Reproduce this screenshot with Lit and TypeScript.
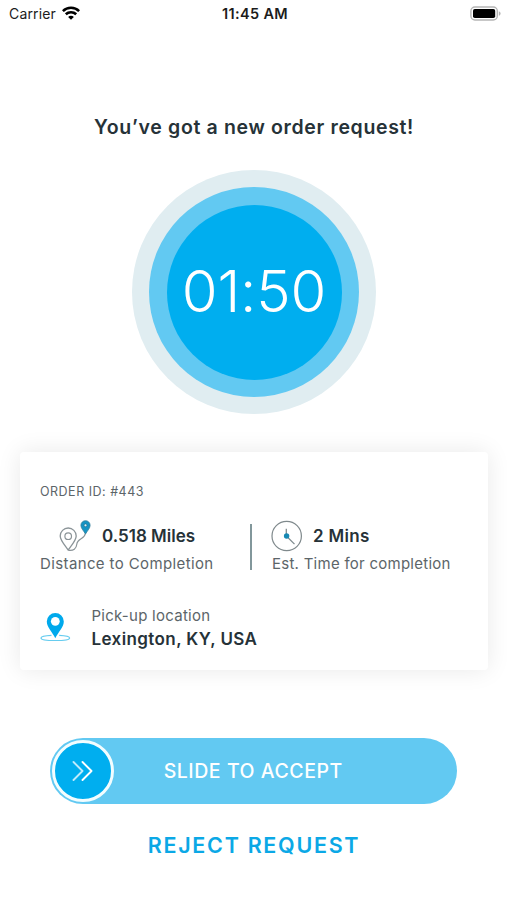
import { LitElement, html, css } from "lit";
import { customElement, property } from "lit/decorators.js";

@customElement("status-bar")
class StatusBar extends LitElement {
  static styles = css`
    :host { display: grid; grid-template-columns: 1fr auto 1fr; align-items: center; height: 26px; padding: 0 6px 0 9px; color: #1c1c1c; }
    .left { display: flex; align-items: center; gap: 6px; font-size: 14px; letter-spacing: 0.15px; }
    .time { font-size: 14.5px; font-weight: 600; letter-spacing: 0.35px; }
    .right { display: flex; justify-content: flex-end; }
    svg { display: block; }
  `;
  render() {
    return html`
      <div class="left"><span>Carrier</span>
        <svg width="18" height="14" viewBox="0 0 18 14" fill="none" stroke="#000" stroke-width="2.6">
          <path d="M.9 5.1C5.3.7 12.7.7 17.1 5.1"/><path d="M3.8 8.3c2.9-2.8 7.5-2.8 10.4 0"/>
          <path d="M9 13.8 6.1 10.9c1.6-1.5 4.2-1.5 5.8 0z" fill="#000" stroke="none"/>
        </svg>
      </div>
      <div class="time">11:45 AM</div>
      <div class="right">
        <svg width="31" height="15" viewBox="0 0 31 15">
          <rect x=".9" y="1" width="26.4" height="13" rx="4" fill="#fff" stroke="#b5b5b5" stroke-width="1.4"/>
          <rect x="3" y="3" width="22.2" height="9" rx="1.8" fill="#000"/>
          <path d="M28.8 5.2c2.4.8 2.4 3.8 0 4.6z" fill="#b5b5b5"/>
        </svg>
      </div>`;
  }
}

@customElement("countdown-dial")
class CountdownDial extends LitElement {
  @property() time = "";
  static styles = css`
    :host { display: block; }
    .outer, .middle, .inner { display: flex; align-items: center; justify-content: center; border-radius: 50%; }
    .outer { width: 244px; height: 244px; background: #e0edf1; }
    .middle { width: 210px; height: 210px; background: #62c9f2; }
    .inner { width: 175px; height: 175px; background: #00aeef; }
    .time { padding-bottom: 3px; color: #fff; font-size: 58px; line-height: 60px; font-weight: 300; letter-spacing: -0.2px; white-space: nowrap; }
  `;
  render() {
    return html`<div class="outer"><div class="middle"><div class="inner"><span class="time">${this.time}</span></div></div></div>`;
  }
}

@customElement("order-card")
class OrderCard extends LitElement {
  static styles = css`
    :host { display: block; box-sizing: border-box; height: 218px; padding: 31px 20px 0; background: #fff; border-radius: 4px; box-shadow: 0 0 24px rgba(0, 0, 0, 0.09); color: #5c6569; }
    svg { display: block; flex: none; }
    .id { font-size: 12.5px; line-height: 18px; letter-spacing: 0.5px; }
    .stats { display: flex; margin-top: 18px; }
    .distance { width: 210px; }
    .value { display: flex; align-items: center; height: 34px; color: #263238; font-size: 17px; font-weight: 600; }
    .distance .value { padding-left: 18px; gap: 10px; }
    .time .value { gap: 10px; }
    .label { font-size: 15px; line-height: 20px; letter-spacing: 0.26px; white-space: nowrap; }
    .stats .label { padding-top: 1px; }
    .distance .label { letter-spacing: 0.38px; }
    .time .label { padding-left: 1px; }
    .divider { width: 2px; height: 46px; margin: 5px 19px 0 0; background: #82979b; }
    .pickup { display: flex; align-items: flex-start; margin-top: 31px; gap: 20px; }
    .pickup svg { margin-top: 5px; }
    .place { margin-top: 1px; padding-left: 0.5px; color: #263238; font-size: 17px; line-height: 24px; font-weight: 600; letter-spacing: 0.4px; }
    .pickup .label { padding: 1px 0 0 0.5px; }
    .mins { letter-spacing: 0.3px; }
  `;
  render() {
    return html`
      <div class="id">ORDER ID: #443</div>
      <div class="stats">
        <div class="distance">
          <div class="value">
            <svg width="34" height="34" viewBox="0 0 34 34" fill="none">
              <path d="M10.2 31C6.2 25.4 2.2 21.2 2.2 17a8 8 0 0 1 16 0c0 4.2-4 8.4-8 14z" stroke="#8b9498" stroke-width="1.3"/>
              <circle cx="10.2" cy="17.2" r="3.3" stroke="#8b9498" stroke-width="1.2"/>
              <path d="M10.5 31.3c5 .6 7.8-1.3 8.3-6 .5-6.3 7.7-4.8 8.7-11" stroke="#8b9498" stroke-width="1.2"/>
              <path d="M27.5 15C25 11 22.900 9 22.900 6.300a4.600 4.600 0 0 1 9.200 0c0 2.700-2.100 4.700-4.600 8.700z" fill="#1594c4" stroke="#347f9b" stroke-width=".8"/>
              <circle cx="27.5" cy="6.3" r="1.4" fill="#d8f1fa" stroke="#24627a" stroke-width=".6"/>
            </svg>
            <span>0.518 Miles</span>
          </div>
          <div class="label">Distance to Completion</div>
        </div>
        <div class="divider"></div>
        <div class="time">
          <div class="value">
            <svg width="32" height="32" viewBox="0 0 32 32" fill="none">
              <circle cx="15.7" cy="16" r="14.7" stroke="#7f898c" stroke-width="1.2"/>
              <path d="M15.3 8.7v7.2l8.2 8.2" stroke="#7f8b8f" stroke-width="1.3"/>
              <circle cx="15.6" cy="16" r="2.7" fill="#1688b3"/>
            </svg>
            <span class="mins">2 Mins</span>
          </div>
          <div class="label">Est. Time for completion</div>
        </div>
      </div>
      <div class="pickup">
        <svg width="31" height="32" viewBox="0 0 31 32" fill="none">
          <path d="M11.5 25.3C5.5 25.6 1 26.6 1 27.9 1 29.5 7.5 30.5 15.3 30.5s14.3-1 14.3-2.6c0-1.3-4.5-2.3-10.4-2.6" stroke="#66ccef" stroke-width="1.2"/>
          <path d="M15.3 28.2C12.5 22 6.8 17.2 6.8 11.4a8.500 8.500 0 0 1 17 0c0 5.800-5.700 10.600-8.500 16.800z" fill="#00a9ec"/>
          <circle cx="15.3" cy="11.3" r="4.4" fill="#fff"/>
        </svg>
        <div>
          <div class="label">Pick-up location</div>
          <div class="place">Lexington, KY, USA</div>
        </div>
      </div>`;
  }
}

@customElement("slide-button")
class SlideButton extends LitElement {
  static styles = css`
    :host { display: flex; align-items: center; box-sizing: border-box; height: 66px; border-radius: 33px; background: #62c9f2; color: #fff; }
    .knob { box-sizing: border-box; flex: none; display: flex; align-items: center; justify-content: center; width: 62px; height: 62px; margin-left: 1.5px; border: 3px solid #f2fdff; border-radius: 50%; background: #00aeef; }
    .text { flex: 1; padding-right: 87px; padding-left: 23px; text-align: center; font-size: 19.5px; font-weight: 500; letter-spacing: 0.55px; white-space: nowrap; }
  `;
  render() {
    return html`
      <div class="knob">
        <svg width="22" height="22" viewBox="0 0 22 22" fill="none" stroke="#fff" stroke-width="1.9" stroke-linecap="round" stroke-linejoin="round">
          <path opacity=".75" d="m1.5 2 9 9-9 9"/><path d="m10.5 2 9 9-9 9"/>
        </svg>
      </div>
      <span class="text">SLIDE TO ACCEPT</span>`;
  }
}

@customElement("app-root")
class AppRoot extends LitElement {
  static styles = css`
    :host { display: flex; flex-direction: column; height: 900px; overflow: hidden; background: #fff; font-family: Inter, "Open Sans", sans-serif; }
    h1 { margin: 87px 0 0; padding-left: 1px; text-align: center; color: #263238; font-size: 19.5px; line-height: 28px; font-weight: 600; letter-spacing: 0.65px; white-space: nowrap; }
    countdown-dial { align-self: center; margin: 29px 0 0 1px; }
    order-card { margin: 38px 19px 0 20px; }
    slide-button { margin: 68px 50px 0 50px; }
    .reject { align-self: center; margin-top: 26px; padding: 0 0 0 1px; border: 0; background: none; color: #0ba8e6; font-family: inherit; font-size: 21.5px; line-height: 30px; font-weight: 600; letter-spacing: 1.7px; }
  `;
  render() {
    return html`
      <status-bar></status-bar>
      <h1>You’ve got a new order request!</h1>
      <countdown-dial time="01:50"></countdown-dial>
      <order-card></order-card>
      <slide-button></slide-button>
      <button class="reject">REJECT REQUEST</button>`;
  }
}
